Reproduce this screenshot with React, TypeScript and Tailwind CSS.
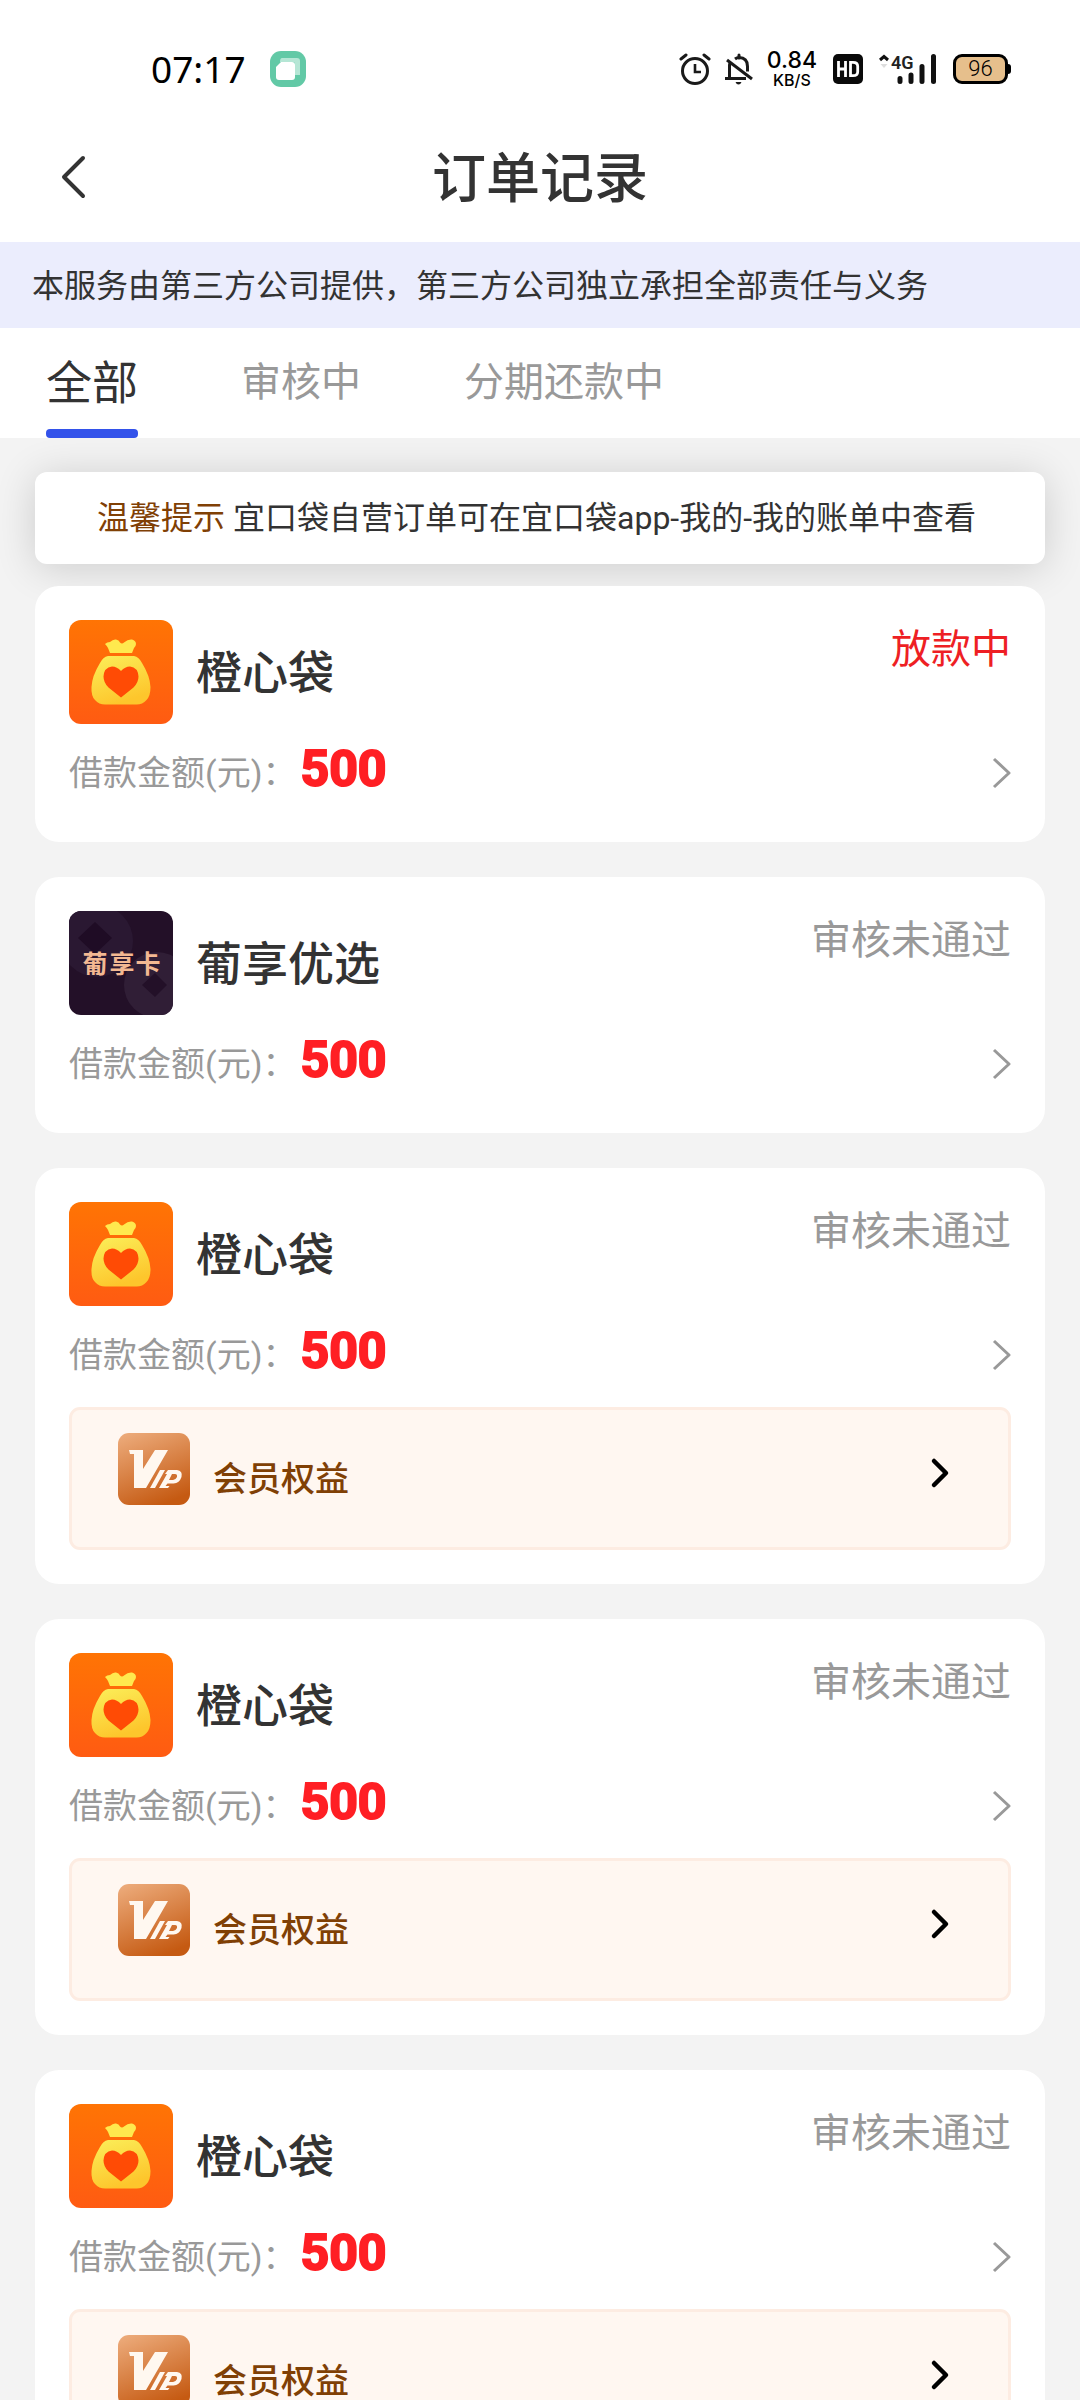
import { useState } from "react";

type Order = {
  id: number;
  name: string;
  logo: "bag" | "card";
  status: string;
  active: boolean;
  amount: number;
  vip: boolean;
};

const tabs = ["全部", "审核中", "分期还款中"];

const orders: Order[] = [
  { id: 1, name: "橙心袋", logo: "bag", status: "放款中", active: true, amount: 500, vip: false },
  { id: 2, name: "葡享优选", logo: "card", status: "审核未通过", active: false, amount: 500, vip: false },
  { id: 3, name: "橙心袋", logo: "bag", status: "审核未通过", active: false, amount: 500, vip: true },
  { id: 4, name: "橙心袋", logo: "bag", status: "审核未通过", active: false, amount: 500, vip: true },
  { id: 5, name: "橙心袋", logo: "bag", status: "审核未通过", active: false, amount: 500, vip: true },
];

function classNames(...classes: string[]) {
  return classes.filter(Boolean).join(" ");
}

function AppBadge() {
  return (
    <svg className="h-9 w-9" viewBox="0 0 36 36" aria-hidden="true">
      <rect width="36" height="36" rx="11" fill="#62c9a6" />
      <path d="M12 7h15q3 0 3 3v14h-5V13q0-2-2-2H10q0-4 2-4z" fill="#b5e6d5" />
      <path d="M11 11h11q3 0 3 3v12q0 3-3 3H9q-3 0-3-3V16z" fill="#fff" />
    </svg>
  );
}

function AlarmIcon() {
  return (
    <svg className="h-8 w-8" viewBox="0 0 32 32" fill="none" stroke="#1a1a1a" strokeWidth="3" aria-hidden="true">
      <circle cx="16" cy="18" r="12.5" />
      <path d="M16 11v8h6" strokeWidth="2.6" />
      <path d="M2 6l5-4M30 6l-5-4" strokeLinecap="round" />
    </svg>
  );
}

function BellOffIcon() {
  return (
    <svg className="h-8 w-8" viewBox="0 0 32 32" fill="none" stroke="#1a1a1a" strokeWidth="3" aria-hidden="true">
      <path d="M2 25.500h21M6.500 25V13q0-2 1-4M12 6q2-1.500 4-1.500 8.500 0 8.500 9v5" />
      <path d="M4 7l25 19" />
      <path d="M16 2v3" strokeLinecap="round" />
      <path d="M12.500 29h6q-1 2.500-3 2.500t-3-2.500z" fill="#1a1a1a" stroke="none" />
    </svg>
  );
}

function HdIcon() {
  return (
    <svg className="h-[30px] w-[30px]" viewBox="0 0 30 30" role="img" aria-label="HD">
      <rect width="30" height="30" rx="5" fill="#0a0a0a" />
      <path
        d="M5.500 7v16M12.500 7v16M5.500 15h7M17.500 8.300v13.400h2.500q4.700 0 4.700-4v-5.400q0-4-4.700-4z"
        fill="none"
        stroke="#fff"
        strokeWidth="2.800"
      />
    </svg>
  );
}

function SignalIcon() {
  return (
    <svg className="h-10 w-[58px]" viewBox="0 -5 58 40" role="img" aria-label="4G">
      <path d="M1 6l4-3.500L9 6" fill="none" stroke="#111" strokeWidth="3" />
      <path d="M1.500 10h7L5 14z" fill="#ddd" />
      <text x="12" y="15" fontSize="18" fontWeight="600" fontFamily="Roboto, sans-serif" fill="#222">
        4G
      </text>
      <g stroke="#111" strokeWidth="5" strokeLinecap="round">
        <path d="M21 24.500v3M32 21v6.500M43 12.500v15M54.500 2.500v25" />
      </g>
    </svg>
  );
}

function Battery() {
  return (
    <div className="flex items-center">
      <div className="flex h-[30px] w-[55px] items-center justify-center rounded-[9px] border-3 border-black bg-[#e6bf8c] text-[22px] leading-none font-light text-black">
        96
      </div>
      <div className="h-[10px] w-[3px] rounded-r-sm bg-black" />
    </div>
  );
}

function StatusBar() {
  return (
    <div className="flex h-[138px] items-center justify-between pl-[151px] pr-[69px]">
      <div className="flex items-center gap-6 font-['Noto_Sans',sans-serif]">
        <time className="text-[37px] leading-10 text-black">07:17</time>
        <AppBadge />
      </div>
      <div className="flex items-center gap-4">
        <div className="flex items-center gap-3">
          <AlarmIcon />
          <BellOffIcon />
          <div className="flex flex-col items-center font-[Inter,sans-serif] font-medium text-black">
            <span className="text-[23px] leading-[22px]">0.84</span>
            <span className="text-[16px] leading-[18px]">KB/S</span>
          </div>
        </div>
        <HdIcon />
        <SignalIcon />
        <Battery />
      </div>
    </div>
  );
}

function BagLogo() {
  return (
    <svg className="h-[104px] w-[104px]" viewBox="0 0 104 104" aria-hidden="true">
      <defs>
        <linearGradient id="bag-bg" x1="0" y1="0" x2="0" y2="1">
          <stop offset="0" stopColor="#ff7404" />
          <stop offset="1" stopColor="#ff5b12" />
        </linearGradient>
        <linearGradient id="bag-fill" x1="0" y1="0" x2="0.4" y2="1">
          <stop offset="0" stopColor="#fbef5a" />
          <stop offset="1" stopColor="#fdc62c" />
        </linearGradient>
      </defs>
      <rect width="104" height="104" rx="12" fill="url(#bag-bg)" />
      <path
        d="M36 24q2-2 5-2 3-3 6-2.500 3 .5 4 3 2 2 4 0 4-3.500 8-3 4 1 4 4.500 0 2-2 4l-2 5H41l-2-5q-1-2-3-4z"
        fill="#ffe94e"
      />
      <path
        d="M39 36h26q5 1 8 7 8 13 8.500 24 0 9-4 13-4 4.500-10 4.500H36q-6 0-10-4.500-4-4-3.500-13Q23 56 31 43q3-6 8-7z"
        fill="url(#bag-fill)"
      />
      <path
        d="M52 51q4-4.500 9-4.500 8 1 8.500 10 0 6-5 11L52 77.500 39.500 67.500q-5-5-5-11Q35 47.500 43 46.500q5 0 9 4.500z"
        fill="#ff4b05"
      />
    </svg>
  );
}

function CardLogo() {
  return (
    <svg className="h-[104px] w-[104px]" viewBox="0 0 104 104" role="img" aria-label="葡享卡">
      <defs>
        <clipPath id="card-clip">
          <rect width="104" height="104" rx="12" />
        </clipPath>
      </defs>
      <g clipPath="url(#card-clip)">
        <rect width="104" height="104" fill="#231028" />
        <circle cx="28" cy="30" r="36" fill="#2a1832" />
        <path d="M26 11l17 16-17 16L9 27z" fill="#1f0c25" />
        <circle cx="88" cy="74" r="33" fill="#301e36" />
        <path d="M86 62l12 12-12 12-13-12z" fill="#231028" />
      </g>
      <g
        fill="#f3b892"
        fontSize="25"
        fontWeight="700"
        fontFamily="'Noto Sans CJK SC', sans-serif"
        textAnchor="middle"
      >
        <text x="26" y="62">葡</text>
        <text x="53" y="62">享</text>
        <text x="79" y="62">卡</text>
      </g>
    </svg>
  );
}

function VipLogo() {
  return (
    <svg className="h-[72px] w-[72px]" viewBox="0 0 72 72" role="img" aria-label="VIP">
      <defs>
        <linearGradient id="vip-bg" x1="0.2" y1="0" x2="0.6" y2="1">
          <stop offset="0" stopColor="#eba877" />
          <stop offset="1" stopColor="#c55a12" />
        </linearGradient>
      </defs>
      <rect width="72" height="72" rx="11" fill="url(#vip-bg)" />
      <g fill="#fff8f0">
        <path d="M11 17h14v19l12-19h13L28 55H16V21h-4z" />
        <path d="M42 37h5L37 55h-5z" />
        <path
          fillRule="evenodd"
          d="M50 37h9q6 1 4.500 7-2 6-8 6.500h-6L47.500 53h4L50 55h-9l8-14h-2zM54 41l-3 6h4q3-.5 4-3 .5-3-2-3z"
        />
      </g>
    </svg>
  );
}

function VipEntry() {
  return (
    <button
      type="button"
      className="mt-4 flex h-[143px] w-full items-start rounded-[11px] border-3 border-[#fdece2] bg-[#fff7f1] pt-[23px] pr-[58px] pl-[46px] text-left"
    >
      <VipLogo />
      <span className="mt-5 ml-[23px] flex-1 text-[34px] leading-[52px] font-medium text-[#804005]">
        会员权益
      </span>
      <svg className="mt-6 h-8 w-5" viewBox="0 0 20 32" fill="none" aria-hidden="true">
        <path d="M4 4l12 12L4 28" stroke="#000" strokeWidth="4.500" strokeLinecap="round" strokeLinejoin="round" />
      </svg>
    </button>
  );
}

function OrderCard({ order }: { order: Order }) {
  return (
    <li
      className={classNames(
        "relative rounded-3xl bg-white px-[34px] pt-[34px]",
        order.vip ? "pb-[34px]" : "pb-[33px]"
      )}
    >
      <div className="flex h-[104px] items-start">
        {order.logo === "bag" ? <BagLogo /> : <CardLogo />}
        <h2 className="ml-[23px] flex-1 text-[46px] leading-[106px] font-medium text-[#333]">
          {order.name}
        </h2>
        <span
          className={classNames(
            "text-[40px] leading-[60px]",
            order.active ? "text-[#ee1f24]" : "text-[#999]"
          )}
        >
          {order.status}
        </span>
      </div>
      <a href="#detail" className="mt-[13px] flex h-[72px] items-center">
        <span className="text-[34px] leading-[48px] text-[#999]">借款金额(元)：</span>
        <strong className="ml-1 flex-1 pb-2 text-[50px] leading-[60px] font-bold text-[#ff1f24] [-webkit-text-stroke:2px_#ff1f24]">
          {order.amount}
        </strong>
        <svg className="h-8 w-5" viewBox="0 0 20 32" fill="none" aria-hidden="true">
          <path d="M3 2l15 14L3 30" stroke="#999" strokeWidth="3" strokeLinejoin="round" />
        </svg>
      </a>
      {order.vip && <VipEntry />}
    </li>
  );
}

export default function App() {
  const [current, setCurrent] = useState(0);

  return (
    <div className="flex h-screen flex-col overflow-hidden bg-[#f3f3f3] font-[Roboto,'Noto_Sans_CJK_SC',sans-serif]">
      <header className="shrink-0 bg-white">
        <StatusBar />
        <div className="grid h-[104px] grid-cols-[1fr_auto_1fr] items-start px-14">
          <button type="button" aria-label="返回" className="mt-[15px] w-9">
            <svg className="h-12 w-9" viewBox="0 0 36 48" fill="none" aria-hidden="true">
              <path d="M27 5L8 24l19 19" stroke="#333" strokeWidth="4" strokeLinecap="round" strokeLinejoin="round" />
            </svg>
          </button>
          <h1 className="text-[54px] leading-[84px] font-medium text-[#333]">订单记录</h1>
        </div>
        <p className="h-[86px] bg-[#ebedfd] pl-8 text-[32px] leading-[88px] whitespace-nowrap text-[#333]">
          本服务由第三方公司提供，第三方公司独立承担全部责任与义务
        </p>
        <nav className="flex h-[110px] gap-[103px] pl-[46px]">
          {tabs.map((tab, i) => (
            <button
              key={tab}
              type="button"
              onClick={() => setCurrent(i)}
              className={classNames(
                "flex flex-col leading-[110px]",
                i === current ? "text-[46px] text-[#333]" : "text-[40px] text-[#999]"
              )}
            >
              {tab}
              {i === current && <span className="-mt-[9px] h-[9px] w-full rounded bg-[#3352ea]" />}
            </button>
          ))}
        </nav>
      </header>

      <main className="flex-1 overflow-y-auto px-[35px] pt-[34px] [scrollbar-width:none]">
        <p className="rounded-xl bg-white pl-[62px] text-[32px] leading-[92px] whitespace-nowrap text-[#333] shadow-[0_4px_40px_rgba(0,0,0,0.16)]">
          <span className="mr-2 text-[#804005]">温馨提示</span>
          宜口袋自营订单可在宜口袋app-我的-我的账单中查看
        </p>
        <ul className="mt-[22px] flex flex-col gap-[35px] pb-[35px]">
          {orders.map((order) => (
            <OrderCard key={order.id} order={order} />
          ))}
        </ul>
      </main>
    </div>
  );
}
